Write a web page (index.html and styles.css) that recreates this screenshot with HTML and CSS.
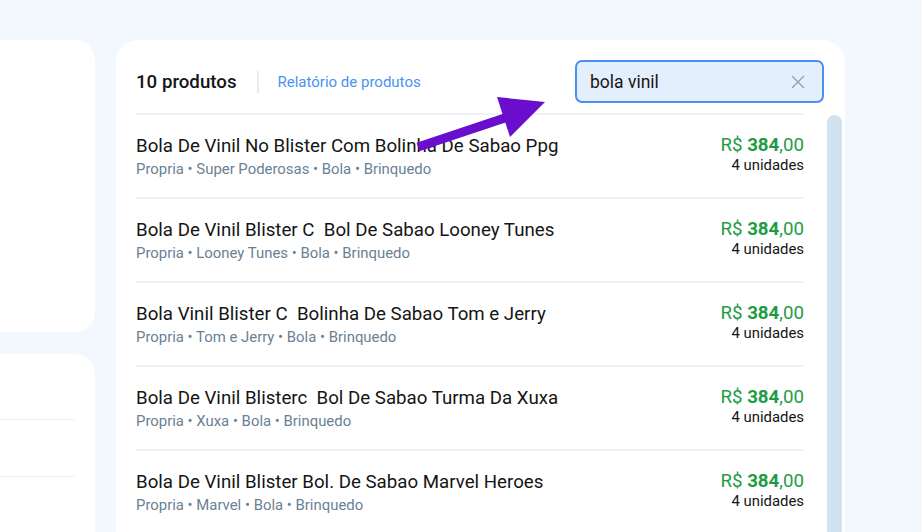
FILE: index.html
```html
<!DOCTYPE html>
<html lang="pt-BR">
<head>
  <meta charset="UTF-8" />
  <meta name="viewport" content="width=device-width, initial-scale=1.0"/>
  <title>Produtos</title>
  <link rel="stylesheet" href="styles.css">
</head>
<body>
  <div class="layout">
    <div class="side">
      <div class="side-card side-top"></div>
      <div class="side-card side-bottom">
        <div class="side-line"></div>
        <div class="side-line"></div>
      </div>
    </div>

    <div class="card">
      <div class="card-header">
        <span class="count">10 produtos</span>
        <a class="report-link">Relatório de produtos</a>
        <div class="search">
          <span class="search-text">bola vinil</span>
          <svg class="clear" width="14" height="14" viewBox="0 0 14 14">
            <path d="M1 1 L13 13 M13 1 L1 13" stroke="#8aa0b6" stroke-width="1.3" fill="none"/>
          </svg>
        </div>
      </div>

      <div class="list-wrap">
        <ul class="list">
          <li class="item">
            <div class="info">
              <div class="name">Bola De Vinil No Blister Com Bolinha De Sabao Ppg</div>
              <div class="meta">Propria • Super Poderosas • Bola • Brinquedo</div>
            </div>
            <div class="price-box">
              <div class="price">R$ <b>384</b>,00</div>
              <div class="units">4 unidades</div>
            </div>
          </li>
          <li class="item">
            <div class="info">
              <div class="name">Bola De Vinil Blister C &nbsp;Bol De Sabao Looney Tunes</div>
              <div class="meta">Propria • Looney Tunes • Bola • Brinquedo</div>
            </div>
            <div class="price-box">
              <div class="price">R$ <b>384</b>,00</div>
              <div class="units">4 unidades</div>
            </div>
          </li>
          <li class="item">
            <div class="info">
              <div class="name">Bola Vinil Blister C &nbsp;Bolinha De Sabao Tom e Jerry</div>
              <div class="meta">Propria • Tom e Jerry • Bola • Brinquedo</div>
            </div>
            <div class="price-box">
              <div class="price">R$ <b>384</b>,00</div>
              <div class="units">4 unidades</div>
            </div>
          </li>
          <li class="item">
            <div class="info">
              <div class="name">Bola De Vinil Blisterc &nbsp;Bol De Sabao Turma Da Xuxa</div>
              <div class="meta">Propria • Xuxa • Bola • Brinquedo</div>
            </div>
            <div class="price-box">
              <div class="price">R$ <b>384</b>,00</div>
              <div class="units">4 unidades</div>
            </div>
          </li>
          <li class="item">
            <div class="info">
              <div class="name">Bola De Vinil Blister Bol. De Sabao Marvel Heroes</div>
              <div class="meta">Propria • Marvel • Bola • Brinquedo</div>
            </div>
            <div class="price-box">
              <div class="price">R$ <b>384</b>,00</div>
              <div class="units">4 unidades</div>
            </div>
          </li>
        </ul>
        <div class="scrollbar"></div>
      </div>

      <svg class="arrow" width="150" height="60" viewBox="0 0 150 60">
        <path d="M2 51 L104 17" stroke="#6a0dcc" stroke-width="9" fill="none"/>
        <polygon points="81,1 129,6 94,41" fill="#6a0dcc"/>
      </svg>
    </div>
  </div>
</body>
</html>
```

FILE: styles.css
```css
* {
  margin: 0;
  padding: 0;
  box-sizing: border-box;
}
body {
  font-family: Roboto, 'Noto Sans', sans-serif;
  background: #f3f7fe;
  height: 532px;
  overflow: hidden;
}
.layout {
  display: grid;
  grid-template-columns: 95px 729px;
  column-gap: 21px;
  padding-top: 40px;
}
.side {
  display: flex;
  flex-direction: column;
  gap: 22px;
}
.side-card {
  background: white;
  border-radius: 0 20px 20px 0;
}
.side-top {
  height: 292px;
}
.side-bottom {
  height: 240px;
  padding-top: 65px;
}
.side-line {
  width: 75px;
  height: 57px;
  border-top: 1px solid #e2eef8;
}

.card {
  position: relative;
  background: white;
  border-radius: 22px 22px 0 0;
  height: 520px;
  padding: 20px 3px 0 20px;
}
.card-header {
  display: flex;
  align-items: center;
  height: 43px;
  padding-right: 18px;
}
.count {
  font-size: 18.7px;
  font-weight: 500;
  color: #151515;
  padding-right: 20px;
  border-right: 2px solid #e4edf8;
  line-height: 22px;
}
.report-link {
  font-size: 15px;
  color: #4a93f1;
  padding-left: 19px;
  cursor: pointer;
}
.search {
  margin-left: auto;
  width: 249px;
  height: 43px;
  display: flex;
  align-items: center;
  justify-content: space-between;
  padding: 0 17px 0 13px;
  background: #e4effd;
  border: 2px solid #4b8ff5;
  border-radius: 7px;
}
.search-text {
  font-size: 17.5px;
  color: #151515;
}

.list-wrap {
  display: flex;
  gap: 23px;
  margin-top: 10px;
}
.list {
  list-style: none;
  flex: 1;
}
.item {
  display: flex;
  justify-content: space-between;
  height: 84px;
  padding-top: 19px;
  border-top: 2px solid #eef3fa;
}
.name {
  font-size: 18.7px;
  color: #151515;
  line-height: 24px;
}
.meta {
  font-size: 14.9px;
  color: #6a8194;
  line-height: 22px;
}
.price-box {
  text-align: right;
}
.price {
  font-size: 18.7px;
  color: #1e9c45;
  line-height: 22px;
}
.price b {
  font-weight: 700;
}
.units {
  font-size: 14.9px;
  color: #151515;
  line-height: 19px;
}
.scrollbar {
  width: 15px;
  height: 440px;
  margin-top: 2px;
  background: #d2e2f1;
  border-radius: 8px 8px 0 0;
}
.arrow {
  position: absolute;
  left: 300px;
  top: 56px;
}
```
